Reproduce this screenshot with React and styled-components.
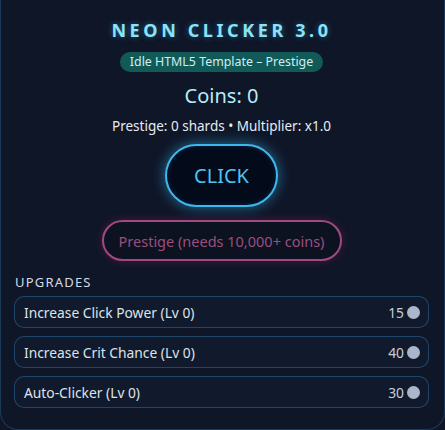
import React from "react";
import styled, { createGlobalStyle } from "styled-components";

const Global = createGlobalStyle`
  html, body { margin: 0; padding: 0; background: #0f1627; }
  body { font-family: "Noto Sans", "Open Sans", sans-serif; }
  * { box-sizing: border-box; }
`;

const Card = styled.div`
  width: 445px;
  height: 430px;
  background: #0f1627;
  border: 1px solid rgba(56, 140, 200, 0.3);
  border-top: none;
  border-radius: 0 0 18px 18px;
  padding: 16px 15px 0 13px;
  display: flex;
  flex-direction: column;
  align-items: center;
`;

const Title = styled.h1`
  margin: 0;
  font-size: 18px;
  font-weight: 700;
  letter-spacing: 3.6px;
  color: #8be3f7;
  text-shadow: 0 0 6px rgba(56, 189, 248, 0.45);
  line-height: 28px;
`;

const Pill = styled.div`
  margin-top: 8px;
  background: #125a58;
  color: #cdeef0;
  font-size: 12.4px;
  line-height: 20px;
  padding: 0 10px;
  border-radius: 10px;
`;

const Coins = styled.div`
  margin-top: 10px;
  font-size: 20px;
  color: #b7ecf7;
  line-height: 28px;
`;

const Stats = styled.div`
  margin-top: 7px;
  font-size: 13.5px;
  color: #e6ecf2;
  line-height: 18px;
`;

const ClickButton = styled.button`
  margin-top: 9px;
  width: 113px;
  height: 63px;
  border-radius: 32px;
  border: 2px solid #3cb8ee;
  background: #030a1a;
  color: #4cc4f2;
  font-family: inherit;
  font-size: 20px;
  box-shadow: 0 0 14px rgba(56, 189, 248, 0.55), inset 0 0 6px rgba(56, 189, 248, 0.15);
  cursor: pointer;
`;

const PrestigeButton = styled.button`
  margin-top: 13px;
  width: 240px;
  height: 41px;
  border-radius: 21px;
  border: 2px solid #a24a7f;
  background: #0c1220;
  color: #9b4f7d;
  font-family: inherit;
  font-size: 14.5px;
  box-shadow: 0 0 10px rgba(219, 39, 119, 0.25);
`;

const Section = styled.div`
  align-self: stretch;
  margin-top: 14px;
  display: flex;
  flex-direction: column;
  gap: 8px;
`;

const SectionLabel = styled.div`
  font-size: 13px;
  letter-spacing: 1.2px;
  color: #d3dbe6;
  padding-left: 1px;
  line-height: 15px;
  margin-bottom: -2px;
`;

const Row = styled.div`
  height: 32px;
  border: 1px solid rgba(56, 140, 200, 0.4);
  border-radius: 10px;
  background: #111a2c;
  display: flex;
  align-items: center;
  justify-content: space-between;
  padding: 0 8px 0 9px;
  color: #dde3ea;
  font-size: 13.8px;
`;

const Cost = styled.span`
  display: flex;
  align-items: center;
  gap: 3px;
  color: #c7cfdb;
`;

const Coin = styled.span`
  width: 13px;
  height: 13px;
  border-radius: 50%;
  background: #aab6c9;
`;

const upgrades = [
  { name: "Increase Click Power (Lv 0)", cost: 15 },
  { name: "Increase Crit Chance (Lv 0)", cost: 40 },
  { name: "Auto-Clicker (Lv 0)", cost: 30 },
];

export default function App() {
  return (
    <>
      <Global />
      <Card>
        <Title>NEON CLICKER 3.0</Title>
        <Pill>Idle HTML5 Template – Prestige</Pill>
        <Coins>Coins: 0</Coins>
        <Stats>Prestige: 0 shards • Multiplier: x1.0</Stats>
        <ClickButton>CLICK</ClickButton>
        <PrestigeButton>Prestige (needs 10,000+ coins)</PrestigeButton>
        <Section>
          <SectionLabel>UPGRADES</SectionLabel>
          {upgrades.map((u) => (
            <Row key={u.name}>
              <span>{u.name}</span>
              <Cost>
                {u.cost}
                <Coin />
              </Cost>
            </Row>
          ))}
        </Section>
      </Card>
    </>
  );
}
